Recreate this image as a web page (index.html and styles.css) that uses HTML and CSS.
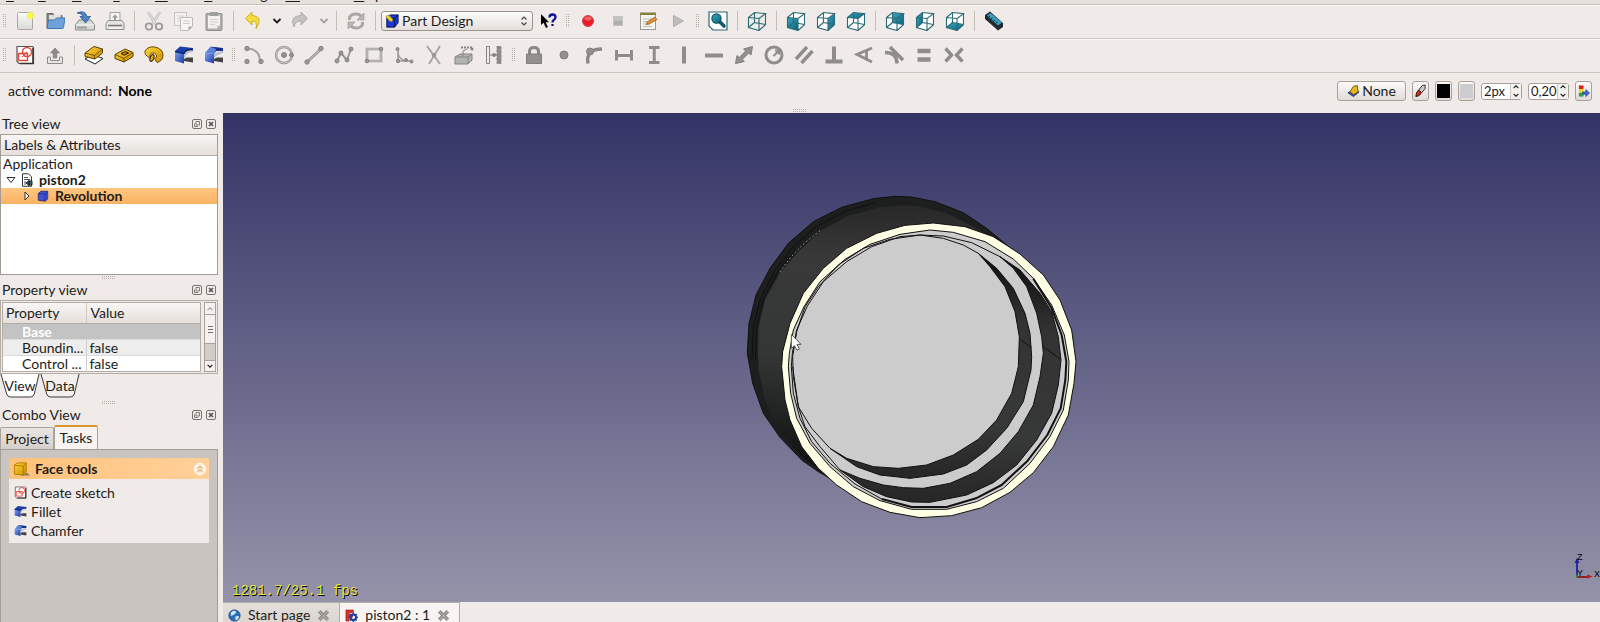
FILE: index.html
```html
<!DOCTYPE html>
<html lang="en">
<head>
    <meta charset="UTF-8">
    <meta name="viewport" content="width=device-width, initial-scale=1.0">
    <title>piston2 : 1</title>
    <link rel="stylesheet" href="styles.css">
</head>
<body>
    <!-- icon set -->
    <svg class="icon-set" aria-hidden="true">
        <defs>
            <linearGradient id="gold" x1="0" y1="0" x2="1" y2="1"><stop offset="0" stop-color="#ffd83a"/><stop offset="1" stop-color="#c98a00"/></linearGradient>
            <linearGradient id="blue" x1="0" y1="0" x2="1" y2="1"><stop offset="0" stop-color="#7fa0ee"/><stop offset="1" stop-color="#1b3ba5"/></linearGradient>
            <linearGradient id="teal" x1="0" y1="0" x2="1" y2="1"><stop offset="0" stop-color="#3fa6be"/><stop offset="1" stop-color="#07647c"/></linearGradient>
            <linearGradient id="paper" x1="0" y1="0" x2="0" y2="1"><stop offset="0" stop-color="#fcfcfa"/><stop offset="1" stop-color="#d8d8d6"/></linearGradient>
        </defs>
        <symbol id="new" viewBox="0 0 20 20"><rect x="2.500" y="1.500" width="15" height="17" rx="1" fill="url(#paper)" stroke="#a8a8a2"/><circle cx="15.500" cy="4.500" r="4" fill="#f7f064" opacity=".8"/><circle cx="15.500" cy="4.500" r="2" fill="#ffff2e"/></symbol>
        <symbol id="open" viewBox="0 0 20 20"><path d="M2 2.500h6l1 2h8v12H2z" fill="#868680" stroke="#6b6b66"/><path d="M4 4h12l-1 6H4z" fill="#e0e0dd"/><path d="M3.500 9h6l2-2h8.500l-1.500 9.500q-.2 1-1.200 1H2z" fill="#6ea2d8" stroke="#3e74b0"/></symbol>
        <symbol id="save" viewBox="0 0 20 20"><path d="M4 9h12l3.500 5v5h-19v-5z" fill="#d9d9d6" stroke="#8a8a86"/><path d="M1 14h18" stroke="#f8f8f8"/><path d="M2 16.500h10" stroke="#9b9b97" stroke-width="2"/><path d="M2 2Q10-1.500 12 5.500h3.500L10.500 12 5 5.500h3Q7 2 2 2z" fill="#4d86c6" stroke="#28568f" stroke-width=".8"/></symbol>
        <symbol id="print" viewBox="0 0 20 20"><path d="M5 10V1.500h10V10" fill="#f3f3f1" stroke="#a0a09c"/><path d="M10 3.500l3 3h-2V9H9V6.500H7z" fill="#999"/><path d="M3 9.500h14l2 3v6H1v-6z" fill="#e2e2df" stroke="#92928e"/><path d="M3 14.500h14" stroke="#777" stroke-width="1.500"/><path d="M4 17h12" stroke="#fff"/></symbol>
        <symbol id="cut" viewBox="0 0 20 20" fill="none"><path d="M4 1l7.500 12M16 1L8.500 13" stroke="#c0beba" stroke-width="2.500"/><path d="M4 1l7.500 12M16 1L8.500 13" stroke="#e9e7e4" stroke-width="1"/><circle cx="5" cy="15.500" r="3.200" stroke="#9c9a97" stroke-width="1.800"/><circle cx="15" cy="15.500" r="3.200" stroke="#9c9a97" stroke-width="1.800"/></symbol>
        <symbol id="copy" viewBox="0 0 20 20"><rect x=".5" y="1.500" width="12" height="13" fill="#f3f2f0" stroke="#c8c6c2"/><path d="M3 5h7M3 7.500h7M3 10h4" stroke="#d0cecb"/><path d="M6.500 6.500h12v9l-4 4h-8z" fill="#f6f5f4" stroke="#bebcb8"/><path d="M9 10h7M9 12.500h7" stroke="#ccc"/><path d="M14.500 19.500v-4h4z" fill="#aaa8a4"/></symbol>
        <symbol id="paste" viewBox="0 0 20 20"><rect x="2" y="2.500" width="16" height="17" rx="1" fill="#b0aeaa" stroke="#93918d"/><path d="M4 4.500h12v10l-3 3H4z" fill="#f1f0ee"/><path d="M6 1h8v4H6z" fill="#a09e9a"/><path d="M6 8.500h8M6 11h8M6 13.500h5" stroke="#d2d0cc"/><path d="M13 17.500v-3h3z" fill="#cbc9c5"/></symbol>
        <symbol id="undo" viewBox="0 0 20 20"><path d="M9 1L2.500 7.500 9 14v-4q6-.5 4 8 8-13-4-13.500z" fill="#f2dc3e" stroke="#c9a91c" stroke-width=".9"/></symbol>
        <symbol id="redo" viewBox="0 0 20 20"><path d="M11 1l6.500 6.500L11 14v-4q-6-.5-7 6-5-11 7-11.500z" fill="#c5c3c0" stroke="#aba9a5" stroke-width=".9"/></symbol>
        <symbol id="refresh" viewBox="0 0 20 20" fill="none"><path d="M3.500 9V6.500Q5 3 10 3q4 0 5.500 3M16.500 11v2.500Q15 17 10 17q-4 0-5.500-3" stroke="#aaa8a5" stroke-width="3"/><path d="M18 2v7h-7zM2 18v-7h7z" fill="#bab8b5" stroke="#9c9a97" stroke-width=".7"/></symbol>
        <symbol id="down" viewBox="0 0 10 10"><path d="M1.500 3L5 6.500 8.500 3" fill="none" stroke="currentColor" stroke-width="1.800"/></symbol>
        <symbol id="up" viewBox="0 0 10 10"><path d="M2 6.500L5 3.500 8 6.500" fill="none" stroke="currentColor" stroke-width="1.300"/></symbol>
        <symbol id="design" viewBox="0 0 16 16"><path d="M2 5l4-4h9v9l-4 5H2z" fill="#1638e0" stroke="#0a1040"/><path d="M2 5h9v10M11 5l4-4" fill="none" stroke="#0a1040"/><path d="M1 3l3-2 5 5-1 3-3-1z" fill="#f0d41d" stroke="#7d6a10" stroke-width=".7"/></symbol>
        <symbol id="whats" viewBox="0 0 20 20"><path d="M3 3v11l2.500-2.200L8 17l2-1-2.400-4.800H11z" fill="#000"/><path d="M11.500 6.500q0-3 3-3t3 2.700q0 1.800-2 3-1 .6-1 2.300M14.500 13v2" fill="none" stroke="#12128c" stroke-width="2.300"/></symbol>
        <symbol id="record" viewBox="0 0 20 20"><circle cx="10" cy="10" r="5.500" fill="#ec1c24" stroke="#c9484b"/><ellipse cx="10" cy="7.500" rx="3.500" ry="2" fill="#f46065"/></symbol>
        <symbol id="stop" viewBox="0 0 20 20"><rect x="5.500" y="5.500" width="9" height="9" fill="#b1afac" stroke="#c6c4c1"/><path d="M6 6h8v4H6z" fill="#c4c2c0"/></symbol>
        <symbol id="macro" viewBox="0 0 20 20"><rect x="2.500" y="2.500" width="15" height="16" fill="#f4f4f0" stroke="#99998f"/><path d="M2 1.500h16v2.500H2z" fill="#85803a"/><path d="M5 8h9M5 10.500h6M5 13h5M5 15.500h9" stroke="#bbb"/><path d="M8 13.500l1-2.500 8-5 2 2.500-8 4.700z" fill="#e3923a" stroke="#8e5a1c" stroke-width=".7"/></symbol>
        <symbol id="play" viewBox="0 0 20 20"><path d="M5.500 4.500v11l10-5.500z" fill="#c0bebb" stroke="#aeaca9"/></symbol>
        <symbol id="fit" viewBox="0 0 20 20"><path d="M1 1h18v18H5l-4-4z" fill="#fff" stroke="#2c6a76" stroke-width="1.200"/><path d="M12 11l4 4" stroke="#0f5a70" stroke-width="3.600" stroke-linecap="round"/><circle cx="8.500" cy="7.500" r="4.600" fill="url(#teal)" stroke="#0b5164" stroke-width="1.200"/></symbol>
        <symbol id="wire" viewBox="0 0 20 20"><path d="M1.500 6.500l10.500 1v12l-10.500-3zM1.500 6.500l6-5 11 1.200-6.500 4.800M18.500 2.700v11l-6.500 5.800M7.500 1.500v10l11 2M7.500 11.500l-6 5" fill="none" stroke="#2b6b76" stroke-width="1.100"/></symbol>
        <symbol id="box" viewBox="0 0 20 20"><path d="M1.500 6.500l6-5 11 1.200v11l-6.500 5.800-10.500-3z" fill="#fff"/></symbol>
        <symbol id="front" viewBox="0 0 20 20"><use href="#box"/><path d="M1.500 6.500l10.500 1v12l-10.500-3z" fill="url(#teal)"/><use href="#wire"/></symbol>
        <symbol id="right" viewBox="0 0 20 20"><use href="#box"/><path d="M12 7.500l6.500-4.800v11L12 19.500z" fill="url(#teal)"/><use href="#wire"/></symbol>
        <symbol id="top" viewBox="0 0 20 20"><use href="#box"/><path d="M1.500 6.500l6-5 11 1.200L12 7.500z" fill="url(#teal)"/><use href="#wire"/></symbol>
        <symbol id="rear" viewBox="0 0 20 20"><use href="#box"/><path d="M7.500 1.500l11 1.200v11l-11-2.200z" fill="url(#teal)"/><use href="#wire"/></symbol>
        <symbol id="left" viewBox="0 0 20 20"><use href="#box"/><path d="M1.500 6.500l6-5v10l-6 5z" fill="url(#teal)"/><use href="#wire"/></symbol>
        <symbol id="bottom" viewBox="0 0 20 20"><use href="#box"/><path d="M1.500 16.500l6-5 11 2.200-6.500 5.800z" fill="url(#teal)"/><use href="#wire"/></symbol>
        <symbol id="measure" viewBox="0 0 20 20"><path d="M1 4l5-3.500 13 11.500v4l-5 3.500L1 8z" fill="#222a30"/><path d="M3 4.500L6.500 2 18 11.500l-4 3z" fill="#3a9dbc"/><path d="M4.500 6l1.500-1M7 8l1.500-1M9.500 10l1.500-1M12 12l1.500-1" stroke="#0c2a36"/></symbol>

        <symbol id="sketch" viewBox="0 0 20 20"><path d="M2 1.500h15.500l1 1v16H4l-2-2z" fill="#fff" stroke="#555" stroke-width="1.200"/><path d="M18 3v15.500H5" fill="none" stroke="#333" stroke-width="1.600"/><circle cx="12" cy="7" r="4.500" fill="none" stroke="#e2453a" stroke-width="1.400"/><path d="M3.500 8.500h9v7h-9z" fill="none" stroke="#e2453a" stroke-width="1.400"/><path d="M7 12l5-5" stroke="#e2453a"/></symbol>
        <symbol id="leave" viewBox="0 0 20 20"><path d="M2.500 12v6.500h15V12h-3v3.500h-9V12z" fill="#e8e5e2" stroke="#8e8c89"/><path d="M10 3l4.500 5h-2.700v5H8.200V8H5.500z" fill="#8e8c89" stroke="#7d7b78" stroke-width=".7"/></symbol>
        <symbol id="pad" viewBox="0 0 20 20"><path d="M1 14l7-4.500 11 4L11 19z" fill="#fff" stroke="#222"/><path d="M1 8l9-6.500 8.500 2.500v4L11 14 1 11.500z" fill="url(#gold)" stroke="#5a3d00"/><path d="M1 8l9.500 2.500L18.500 4M10.500 10.500V14" fill="none" stroke="#5a3d00" stroke-width=".8"/></symbol>
        <symbol id="pocket" viewBox="0 0 20 20"><path d="M1 9.500L11 4l8 3.500v4L10 17l-9-3.500z" fill="url(#gold)" stroke="#5a3d00"/><path d="M1 9.500l9 4 9-6M10 13.500V17" fill="none" stroke="#5a3d00" stroke-width=".8"/><path d="M7 8.500l4.500-2 3 1.500-4 2.200z" fill="#b88400" stroke="#2c1d00"/></symbol>
        <symbol id="revolve" viewBox="0 0 20 20"><path d="M6 13q-6-3-5-7 3-5 10-4 8 2 8 8 0 6-6 7.500l-2.500-4q3-1 2-3.500-2-3-5-2-2 .6-1.500 5z" fill="url(#gold)" stroke="#6e4a00"/><ellipse cx="8" cy="13" rx="1.800" ry="3.500" fill="#e8a800" stroke="#2c1d00" transform="rotate(20 8 13)"/></symbol>
        <symbol id="fillet" viewBox="0 0 20 20"><path d="M10 14l3-1.500h6v5l-9-1.500z" fill="#444"/><path d="M9 9q3-5 10-4v2q-6-.5-8 6l-2 1z" fill="#b9bfd4"/><path d="M1 6l9 2v10.500L1 16z" fill="url(#blue)"/><path d="M1 6l5-4.500L19 3v2.500Q12 4 10 9L1 7z" fill="#1c3fb0"/><path d="M1 6.500l9 2Q12 4 19 4.500" fill="none" stroke="#0b1c5a" stroke-width="1.200"/></symbol>
        <symbol id="chamfer" viewBox="0 0 20 20"><path d="M10 14l3-1.500h6v5l-9-1.500z" fill="#444"/><path d="M10 8l9-2v2l-7 3-2 3z" fill="#b9bfd4"/><path d="M1 8l9 1v9.500L1 16z" fill="url(#blue)"/><path d="M1 8l5-6 7 .5L10 9z" fill="#5b82dd"/><path d="M6 1.500L19 3v3L12 6l-2 3 2-5z" fill="#162f8a"/></symbol>

        <symbol id="arc" viewBox="0 0 20 20"><path d="M4 3.500q12 1 12 13" fill="none" stroke="#a5a3a0" stroke-width="2"/><g fill="#9a9895" stroke="#858380"><circle cx="3" cy="3.500" r="2.200"/><circle cx="3" cy="16.500" r="2.200"/><circle cx="17" cy="16.500" r="2.200"/></g></symbol>
        <symbol id="circle" viewBox="0 0 20 20"><circle cx="10" cy="10" r="8" fill="none" stroke="#989693" stroke-width="2.400"/><circle cx="10" cy="10" r="8" fill="none" stroke="#cfccc9" stroke-width=".8"/><g fill="#94928f" stroke="#858380"><circle cx="10" cy="10" r="2.500"/><circle cx="17.500" cy="10" r="2"/></g></symbol>
        <symbol id="line" viewBox="0 0 20 20"><path d="M3 17L17 4" stroke="#989693" stroke-width="3"/><path d="M3 17L17 4" stroke="#cfccc9"/><g fill="#9a9895" stroke="#858380"><circle cx="3" cy="17" r="2.200"/><circle cx="17" cy="3.500" r="2.200"/></g></symbol>
        <symbol id="poly" viewBox="0 0 20 20"><path d="M3 16l4-8 6 7 4-11" fill="none" stroke="#989693" stroke-width="2"/><g fill="#9a9895" stroke="#858380"><circle cx="3" cy="16" r="2"/><circle cx="7" cy="8" r="2"/><circle cx="13" cy="15" r="2"/><circle cx="17" cy="4" r="2"/></g></symbol>
        <symbol id="rect" viewBox="0 0 20 20"><path d="M3 4h14v12H3z" fill="none" stroke="#989693" stroke-width="2.600"/><path d="M3 4h14v12H3z" fill="none" stroke="#dad7d4" stroke-width=".8"/><g fill="#9a9895" stroke="#858380"><circle cx="3" cy="16" r="1.800"/><circle cx="17" cy="4" r="1.800"/></g></symbol>
        <symbol id="corner" viewBox="0 0 20 20"><path d="M4 3v13h13M4 8q1 7 9 8" fill="none" stroke="#9f9d9a" stroke-width="1.600"/><g fill="#9a9895" stroke="#858380"><circle cx="3.500" cy="4" r="1.500"/><circle cx="4" cy="16" r="1.700"/><circle cx="12" cy="15" r="1.500"/><circle cx="17.500" cy="16.500" r="1.500"/></g></symbol>
        <symbol id="trim" viewBox="0 0 20 20"><path d="M3 1l13 18M16 1L5 19" fill="none" stroke="#a3a19e" stroke-width="1.800"/><circle cx="10" cy="10" r="2.300" fill="#9a9895"/></symbol>
        <symbol id="external" viewBox="0 0 20 20"><path d="M1 12l5-3h12v6l-4 4H1z" fill="#b5b3b0" stroke="#858380"/><path d="M1 12h13v7M14 12l4-3M9 11V6l4-2" fill="none" stroke="#858380"/><path d="M7 2.500h11" stroke="#858380" stroke-dasharray="2 1" stroke-width="2"/><circle cx="18" cy="4" r="1.500" fill="#858380"/></symbol>
        <symbol id="mirror" viewBox="0 0 20 20"><path d="M2.500 1.500h3v17h-3z" fill="#f1eeeb" stroke="#858380"/><path d="M13 1.500h4v17h-4z" fill="#8f8d8a" stroke="#858380" stroke-dasharray="3 1"/><path d="M6 10h7" stroke="#858380"/><circle cx="10" cy="10" r="2" fill="#858380"/></symbol>

        <symbol id="lock" viewBox="0 0 20 20"><path d="M5.500 10V6.500q0-4 4.500-4t4.500 4V10" fill="none" stroke="#8a8886" stroke-width="3"/><path d="M2.500 9h15v9.500h-15z" fill="#93918f" stroke="#807e7c"/></symbol>
        <symbol id="point" viewBox="0 0 20 20"><circle cx="10" cy="10" r="4" fill="#93918f" stroke="#807e7c"/></symbol>
        <symbol id="pointon" viewBox="0 0 20 20"><path d="M4 18.500Q1.500 4 18 4" fill="none" stroke="#8a8886" stroke-width="3.400"/><circle cx="6" cy="6.500" r="3.500" fill="#93918f" stroke="#807e7c"/></symbol>
        <symbol id="distx" viewBox="0 0 20 20"><path d="M2.500 5v10.500M17.500 5v10.500M2.500 10.500h15" stroke="#8f8d8b" stroke-width="3"/></symbol>
        <symbol id="disty" viewBox="0 0 20 20"><path d="M5 2.500h10.500M5 17.500h10.500M10.250 2.500v15" stroke="#8f8d8b" stroke-width="3"/></symbol>
        <symbol id="vert" viewBox="0 0 20 20"><path d="M10 1.500v17" stroke="#8f8d8b" stroke-width="4"/></symbol>
        <symbol id="horiz" viewBox="0 0 20 20"><path d="M1 10.500h18" stroke="#8f8d8b" stroke-width="4"/></symbol>
        <symbol id="dist" viewBox="0 0 20 20"><path d="M1.500 18.500l1.500-8 2.200 2 6.500-6.500-2.200-2 9-2.500-1.500 8.500-2.300-2-6.500 6.500 2.200 2z" fill="#93918f" stroke="#807e7c"/></symbol>
        <symbol id="radius" viewBox="0 0 20 20"><circle cx="10" cy="10" r="8" fill="none" stroke="#8f8d8b" stroke-width="3"/><path d="M9.500 11l5-5M11 5.500h4v4" fill="none" stroke="#8f8d8b" stroke-width="2"/></symbol>
        <symbol id="parallel" viewBox="0 0 20 20"><path d="M2 14L13 2M7.500 18l11-12" stroke="#8f8d8b" stroke-width="3.400"/></symbol>
        <symbol id="perp" viewBox="0 0 20 20"><path d="M10 1.500V16M1.500 16.500h17" stroke="#8f8d8b" stroke-width="4"/></symbol>
        <symbol id="angle" viewBox="0 0 20 20"><path d="M18 3L3 9.500 18 17M12.500 6v8" fill="none" stroke="#8f8d8b" stroke-width="2.800"/></symbol>
        <symbol id="tangent" viewBox="0 0 20 20"><path d="M6 2l13 13M1 7.500q12 0 12 11" fill="none" stroke="#8f8d8b" stroke-width="3.400"/></symbol>
        <symbol id="equal" viewBox="0 0 20 20"><path d="M3.500 6h13M3.500 14.500h13" stroke="#8f8d8b" stroke-width="4.500"/></symbol>
        <symbol id="symm" viewBox="0 0 20 20"><path d="M1.500 3.500l6 6.500-6 6.500M18.500 3.500l-6 6.500 6 6.500" fill="none" stroke="#8f8d8b" stroke-width="3.400"/></symbol>

        <symbol id="plane" viewBox="0 0 14 14"><path d="M1 9l4-2 8 1-6 5z" fill="#2e50b8" stroke="#14204d" stroke-width=".8"/><path d="M3 8l4-6 4-1 1 7-5 3z" fill="#e9b51c" stroke="#4f3b00" stroke-width=".8"/></symbol>
        <symbol id="brush" viewBox="0 0 14 14"><path d="M5 6l4-5 3-.5v4L8 9z" fill="#ccc" stroke="#222"/><path d="M2 13q0-5 3-7l3 3q-2 4-6 4z" fill="#c33222" stroke="#3a0e08"/></symbol>
        <symbol id="apply" viewBox="0 0 14 14"><path d="M2 1h5v4H2z" fill="#e02020"/><path d="M2 5h5v4H2z" fill="#e8d820"/><path d="M2 9h5v4H2z" fill="#28a050"/><path d="M6 8h3.500V5.500l4 3.700-4 3.800v-2.500H6z" fill="#3c6cc8" stroke="#1b3a80" stroke-width=".7"/></symbol>
        <symbol id="float" viewBox="0 0 10 10"><rect x=".5" y=".5" width="9" height="9" rx="1.500" fill="none" stroke="#77736f"/><path d="M4 2.500h3.500V6H4zM2.500 4.500V7.500H6" fill="none" stroke="#77736f" stroke-width=".9"/></symbol>
        <symbol id="close" viewBox="0 0 10 10"><rect x=".5" y=".5" width="9" height="9" rx="1.500" fill="none" stroke="#77736f"/><path d="M3 3l4 4M7 3L3 7" stroke="#55514e" stroke-width="1.600"/></symbol>
        <symbol id="doc" viewBox="0 0 12 14"><path d="M1.500 .8h6l3 3v9.500h-9z" fill="#fff" stroke="#333"/><path d="M3 4.500h4M3 6.500h6M3 9h2M3 11h2" stroke="#555"/><path d="M5 10l3-2.500v5zM8 8h3v4H8z" fill="#2a6c74" stroke="#242424"/></symbol>
        <symbol id="cube" viewBox="0 0 14 14"><path d="M1.500 4l3-2.500h8v9l-3 2.500-8-1z" fill="#3a50d0" stroke="#27307c"/><path d="M1.500 4l8 .8V13M9.500 4.800l3-3.300" fill="none" stroke="#27307c"/></symbol>
        <symbol id="goldcube" viewBox="0 0 18 16"><path d="M8 15h10l-3-3z" fill="#8a7a5c"/><path d="M1.500 4l3-2.500H14V11l-3 3.500-9.500-1z" fill="url(#gold)" stroke="#b07a00"/><path d="M1.500 4l9.500 1v9.500M11 5l3-3.500" fill="none" stroke="#b07a00"/></symbol>
        <symbol id="collapse" viewBox="0 0 12 12"><circle cx="6" cy="6" r="5.500" fill="#f6efe4" stroke="#fff"/><path d="M3.500 5.800L6 3.300l2.500 2.500M3.500 9L6 6.500 8.500 9" fill="none" stroke="#eeb46e" stroke-width="1.200"/></symbol>
        <symbol id="globe" viewBox="0 0 14 14"><circle cx="7" cy="7" r="6" fill="#2f6fb8" stroke="#1c4a86"/><path d="M3 4q3-3 5-1.500T6.500 6 3 7zM8 8q3-1 4 0-1 4-4 4z" fill="#d4e6f6"/></symbol>
        <symbol id="app" viewBox="0 0 14 14"><path d="M1 1h8v3H4.500v2H8v3H4.500v4H1z" fill="#e03022" stroke="#8c1810" stroke-width=".6"/><circle cx="9" cy="9" r="3" fill="none" stroke="#1d3c9c" stroke-width="2.200"/><path d="M9 4v2M9 12v2M4 9h2M12 9h2M5.500 5.500L7 7M11 11l1.500 1.500M12.500 5.500L11 7M5.500 12.500L7 11" stroke="#1d3c9c" stroke-width="1.500"/></symbol>
        <symbol id="cross" viewBox="0 0 12 12"><path d="M2 2l8 8M10 2l-8 8" stroke="#8a8682" stroke-width="3.200"/><path d="M2 2l8 8M10 2l-8 8" stroke="#b5b1ad"/></symbol>
    </svg>

    <nav class="menubar">
        <a href="#"><u>F</u>ile</a><a href="#"><u>E</u>dit</a><a href="#"><u>V</u>iew</a><a href="#"><u>T</u>ools</a><a href="#"><u>M</u>acro</a><a href="#"><u>P</u>art Design</a><a href="#"><u>W</u>indows</a><a href="#"><u>H</u>elp</a>
    </nav>

    <div class="toolbar">
        <span class="handle"></span>
        <button class="tool" aria-label="New"><svg><use href="#new"/></svg></button>
        <button class="tool" aria-label="Open"><svg><use href="#open"/></svg></button>
        <button class="tool" aria-label="Save"><svg><use href="#save"/></svg></button>
        <button class="tool" aria-label="Print"><svg><use href="#print"/></svg></button>
        <span class="sep"></span>
        <button class="tool" aria-label="Cut"><svg><use href="#cut"/></svg></button>
        <button class="tool" aria-label="Copy"><svg><use href="#copy"/></svg></button>
        <button class="tool" aria-label="Paste"><svg><use href="#paste"/></svg></button>
        <span class="sep"></span>
        <button class="tool" aria-label="Undo"><svg><use href="#undo"/></svg></button>
        <button class="drop" aria-label="Undo list"><svg><use href="#down"/></svg></button>
        <button class="tool" aria-label="Redo"><svg><use href="#redo"/></svg></button>
        <button class="drop off" aria-label="Redo list"><svg><use href="#down"/></svg></button>
        <span class="sep"></span>
        <button class="tool" aria-label="Refresh"><svg><use href="#refresh"/></svg></button>
        <span class="sep"></span>
        <div class="workbench">
            <svg class="wb-icon"><use href="#design"/></svg>
            <select aria-label="Workbench"><option>Part Design</option></select>
            <svg class="wb-arrows" viewBox="0 0 8 12"><path d="M1.500 4.500L4 2l2.500 2.500M1.500 7.500L4 10l2.500-2.500" fill="none" stroke="#444" stroke-width="1.200"/></svg>
        </div>
        <button class="tool" aria-label="What's this?"><svg><use href="#whats"/></svg></button>
        <span class="handle"></span>
        <button class="tool" aria-label="Record macro"><svg><use href="#record"/></svg></button>
        <button class="tool" aria-label="Stop macro"><svg><use href="#stop"/></svg></button>
        <button class="tool" aria-label="Macros"><svg><use href="#macro"/></svg></button>
        <button class="tool" aria-label="Execute macro"><svg><use href="#play"/></svg></button>
        <span class="handle"></span>
        <button class="tool" aria-label="Fit all"><svg><use href="#fit"/></svg></button>
        <span class="sep"></span>
        <button class="tool" aria-label="Axometric"><svg><use href="#wire"/></svg></button>
        <span class="sep"></span>
        <button class="tool" aria-label="Front"><svg><use href="#front"/></svg></button>
        <button class="tool" aria-label="Right"><svg><use href="#right"/></svg></button>
        <button class="tool" aria-label="Top"><svg><use href="#top"/></svg></button>
        <span class="sep"></span>
        <button class="tool" aria-label="Rear"><svg><use href="#rear"/></svg></button>
        <button class="tool" aria-label="Left"><svg><use href="#left"/></svg></button>
        <button class="tool" aria-label="Bottom"><svg><use href="#bottom"/></svg></button>
        <span class="sep"></span>
        <button class="tool" aria-label="Measure distance"><svg><use href="#measure"/></svg></button>
    </div>

    <div class="toolbar">
        <span class="handle"></span>
        <button class="tool" aria-label="Create sketch"><svg><use href="#sketch"/></svg></button>
        <button class="tool" aria-label="Leave sketch"><svg><use href="#leave"/></svg></button>
        <span class="sep"></span>
        <button class="tool" aria-label="Pad"><svg><use href="#pad"/></svg></button>
        <button class="tool" aria-label="Pocket"><svg><use href="#pocket"/></svg></button>
        <button class="tool" aria-label="Revolution"><svg><use href="#revolve"/></svg></button>
        <button class="tool" aria-label="Fillet"><svg><use href="#fillet"/></svg></button>
        <button class="tool" aria-label="Chamfer"><svg><use href="#chamfer"/></svg></button>
        <span class="handle"></span>
        <button class="tool" aria-label="Arc"><svg><use href="#arc"/></svg></button>
        <button class="tool" aria-label="Circle"><svg><use href="#circle"/></svg></button>
        <button class="tool" aria-label="Line"><svg><use href="#line"/></svg></button>
        <button class="tool" aria-label="Polyline"><svg><use href="#poly"/></svg></button>
        <button class="tool" aria-label="Rectangle"><svg><use href="#rect"/></svg></button>
        <button class="tool" aria-label="Sketch fillet"><svg><use href="#corner"/></svg></button>
        <button class="tool" aria-label="Trim"><svg><use href="#trim"/></svg></button>
        <button class="tool" aria-label="External geometry"><svg><use href="#external"/></svg></button>
        <button class="tool" aria-label="Construction mode"><svg><use href="#mirror"/></svg></button>
        <span class="handle"></span>
        <button class="tool" aria-label="Lock"><svg><use href="#lock"/></svg></button>
        <button class="tool" aria-label="Coincident"><svg><use href="#point"/></svg></button>
        <button class="tool" aria-label="Point on object"><svg><use href="#pointon"/></svg></button>
        <button class="tool" aria-label="Horizontal distance"><svg><use href="#distx"/></svg></button>
        <button class="tool" aria-label="Vertical distance"><svg><use href="#disty"/></svg></button>
        <button class="tool" aria-label="Vertical"><svg><use href="#vert"/></svg></button>
        <button class="tool" aria-label="Horizontal"><svg><use href="#horiz"/></svg></button>
        <button class="tool" aria-label="Distance"><svg><use href="#dist"/></svg></button>
        <button class="tool" aria-label="Radius"><svg><use href="#radius"/></svg></button>
        <button class="tool" aria-label="Parallel"><svg><use href="#parallel"/></svg></button>
        <button class="tool" aria-label="Perpendicular"><svg><use href="#perp"/></svg></button>
        <button class="tool" aria-label="Angle"><svg><use href="#angle"/></svg></button>
        <button class="tool" aria-label="Tangent"><svg><use href="#tangent"/></svg></button>
        <button class="tool" aria-label="Equal"><svg><use href="#equal"/></svg></button>
        <button class="tool" aria-label="Symmetric"><svg><use href="#symm"/></svg></button>
    </div>

    <div class="command">
        <span>active command:</span>
        <b>None</b>
        <div class="draft">
            <button class="btn wide"><svg><use href="#plane"/></svg>None</button>
            <button class="btn" aria-label="Construction"><svg><use href="#brush"/></svg></button>
            <button class="btn" aria-label="Line color"><span class="swatch black"></span></button>
            <button class="btn" aria-label="Face color"><span class="swatch grey"></span></button>
            <div class="spin">
                <input type="text" value="2px" aria-label="Line width">
                <div class="steps"><button aria-label="More"><svg><use href="#up"/></svg></button><button aria-label="Less"><svg class="flip"><use href="#up"/></svg></button></div>
            </div>
            <div class="spin">
                <input type="text" value="0,20" aria-label="Text size">
                <div class="steps"><button aria-label="More"><svg><use href="#up"/></svg></button><button aria-label="Less"><svg class="flip"><use href="#up"/></svg></button></div>
            </div>
            <button class="btn" aria-label="Apply style"><svg><use href="#apply"/></svg></button>
        </div>
    </div>
    <div class="grip"></div>

    <main class="workspace">
        <aside class="docks">
            <section class="dock">
                <header class="dock-title">Tree view
                    <button aria-label="Float"><svg><use href="#float"/></svg></button><button aria-label="Close"><svg><use href="#close"/></svg></button>
                </header>
                <div class="tree">
                    <div class="tree-head">Labels &amp; Attributes</div>
                    <ul>
                        <li class="root">Application</li>
                        <li class="document"><svg class="arrow" viewBox="0 0 10 10"><path d="M1 2.500h8L5 7.500z" fill="#fff" stroke="#333"/></svg><svg class="item"><use href="#doc"/></svg>piston2</li>
                        <li class="feature"><svg class="arrow" viewBox="0 0 10 10"><path d="M3 1v8L7 5z" fill="#fff" stroke="#333"/></svg><svg class="item"><use href="#cube"/></svg>Revolution</li>
                    </ul>
                </div>
            </section>
            <div class="grip"></div>

            <section class="dock">
                <header class="dock-title">Property view
                    <button aria-label="Float"><svg><use href="#float"/></svg></button><button aria-label="Close"><svg><use href="#close"/></svg></button>
                </header>
                <div class="props">
                    <div class="props-scroll">
                        <table>
                            <thead><tr><th>Property</th><th>Value</th></tr></thead>
                            <tbody>
                                <tr class="group"><td colspan="2">Base</td></tr>
                                <tr class="alt"><td>Boundin...</td><td>false</td></tr>
                                <tr><td>Control ...</td><td>false</td></tr>
                            </tbody>
                        </table>
                    </div>
                    <div class="scrollbar">
                        <button class="off" aria-label="Scroll up"><svg><use href="#up"/></svg></button>
                        <span class="thumb"></span>
                        <button aria-label="Scroll down"><svg class="flip"><use href="#up"/></svg></button>
                    </div>
                </div>
                <div class="view-tabs">
                    <button class="active"><svg viewBox="0 0 42 24" preserveAspectRatio="none"><path d="M1 0l6 20q1 3 4 3h21q3 0 4-3l5-20" fill="#fff" stroke="#333"/></svg><span>View</span></button>
                    <button><svg viewBox="0 0 42 24" preserveAspectRatio="none"><path d="M1 0l6 20q1 3 4 3h21q3 0 4-3l5-20" fill="#f3efec" stroke="#333"/></svg><span>Data</span></button>
                </div>
            </section>
            <div class="grip"></div>

            <section class="dock combo">
                <header class="dock-title">Combo View
                    <button aria-label="Float"><svg><use href="#float"/></svg></button><button aria-label="Close"><svg><use href="#close"/></svg></button>
                </header>
                <div class="tabs">
                    <button>Project</button>
                    <button class="active">Tasks</button>
                </div>
                <div class="tasks">
                    <div class="task-box">
                        <h2><svg class="face"><use href="#goldcube"/></svg>Face tools<svg class="fold"><use href="#collapse"/></svg></h2>
                        <a href="#"><svg><use href="#sketch"/></svg>Create sketch</a>
                        <a href="#"><svg><use href="#fillet"/></svg>Fillet</a>
                        <a href="#"><svg><use href="#chamfer"/></svg>Chamfer</a>
                    </div>
                </div>
            </section>
        </aside>

        <section class="viewer">
            <div class="scene">
                <!-- piston, 3 units per pixel -->
                <svg class="piston" viewBox="36 39 1020 990" stroke="#111" stroke-width="3" stroke-linejoin="round">
                    <defs>
                        <linearGradient id="side" x1="0" y1="0" x2="0" y2="1"><stop offset="0" stop-color="#282828"/><stop offset=".2" stop-color="#393939"/><stop offset=".55" stop-color="#343636"/><stop offset="1" stop-color="#0d0d0d"/></linearGradient>
                        <linearGradient id="inner" x1="0" y1="0" x2="0" y2="1"><stop offset="0" stop-color="#0d0d0d"/><stop offset=".3" stop-color="#333"/><stop offset=".75" stop-color="#373838"/><stop offset="1" stop-color="#262626"/></linearGradient>
                    </defs>
                    <path fill="#1c1f1e" d="M53 500L57 430 78 345 120 265 175 190 250 125 335 82 430 56 495 49 545 51 615 65 700 98 770 145 830 195 600 500 300 895 265 875 215 840 150 772 100 700 68 610 52 520z"/>
                    <path fill="url(#side)" stroke="none" d="M84 520L86 440 105 360 150 278 205 215 275 150 355 108 450 82 510 76 560 77 650 100 720 135 790 175 600 500 300 890 215 830 150 755 105 660 86 570z"/>
                    <path fill="none" stroke="#0e100f" stroke-width="3" d="M66 540L70 440 92 355 135 272 190 200 262 138 345 94 435 68M76 540L80 440 100 358 143 275 198 208"/>
                    <path fill="none" stroke="#b5b5b5" stroke-width="3" stroke-dasharray="4 8" d="M150 275L185 228 225 188 270 152"/>
                    <path fill="#ffffe6" d="M610 129L525 136 440 160 350 205 280 265 220 340 180 430 158 515 155 560 165 660 180 720 215 800 265 865 320 915 395 965 480 997 570 1013 665 1007 755 983 840 937 910 878 970 800 1015 705 1032 610 1038 545 1025 450 990 360 940 285 870 222 790 170 705 140z"/>
                    <path fill="#ccc" d="M600 150L510 163 420 193 345 238 270 305 222 380 190 450 178 520 175 560 182 640 200 715 240 790 300 860 370 920 450 962 545 988 650 988 740 965 820 925 900 850 960 770 1000 690 1015 600 1017 545 1003 465 965 375 910 295 850 237 765 185 670 157z"/>
                    <path fill="none" stroke-width="6" d="M910 296L965 385 995 465 1009 545 1006 600 992 685 952 765 893 842 815 915 738 955 650 981 545 981 455 957"/>
                    <path fill="none" d="M455 957L375 912 300 850 245 785 210 715 190 640 184 560 187 520 200 450 232 378 280 305 350 245 425 200 510 170 570 165 640 168 725 188 810 230 875 280M188 560L205 680 225 740 270 800 330 870"/>
                    <path fill="url(#inner)" d="M810 230L870 270 930 340 965 395 985 470 993 540 985 615 965 700 920 780 860 855 790 908 710 945 600 967 545 966 470 950 400 920 330 870 390 895 460 915 520 923 580 925 660 910 740 875 810 820 865 755 910 675 930 590 940 520 935 470 920 400 890 320 850 265z"/>
                    <path fill="url(#inner)" d="M745 220L800 265 850 325 885 400 900 460 905 530 903 570 880 665 830 745 770 810 710 855 640 882 540 895 450 885 380 860 300 805 350 835 430 860 505 865 590 855 670 825 745 778 800 720 845 640 865 560 868 470 855 395 825 320 780 260z"/>
                    <path fill="none" d="M300 805L245 745 205 680 190 590 188 530 200 455 225 380 265 320 325 255 400 205 480 178 570 165 640 175 700 195 745 220M872 480L905 502M940 500L990 537"/>
                    <path fill="#fff" stroke="#555" stroke-width="3" d="M184 463v42l9-8 8 14 7-4-7-14h12z"/>
                </svg>
                <p class="fps">1281.7/25.1 fps</p>
                <svg class="axes" viewBox="0 0 28 30"><path d="M5 24V9" stroke="#2b2ba5" stroke-width="2"/><path d="M2.500 11L5 6l2.500 5z" fill="#1f1f96"/><path d="M5 25h13" stroke="#8e2027" stroke-width="2"/><path d="M15 22.500l6 2-6 2z" fill="#b4232a"/><path d="M4 24h2" stroke="#1d8a2a" stroke-width="3"/><text x="5" y="8">Z</text><text x="5" y="24">Y</text><text x="22" y="25">X</text></svg>
            </div>
            <div class="doc-tabs">
                <button><svg><use href="#globe"/></svg>Start page<svg><use href="#cross"/></svg></button>
                <button class="active"><svg><use href="#app"/></svg>piston2 : 1<svg><use href="#cross"/></svg></button>
            </div>
        </section>
    </main>
</body>
</html>
```

FILE: styles.css
```css
* {
    box-sizing: border-box;
}
body {
    display: flex;
    flex-direction: column;
    height: 100vh;
    margin: 0;
    overflow: hidden;
    background-color: #f0ebe8;
    color: #1e1c1a;
    font-family: Lato, "Open Sans", sans-serif;
    font-size: 14px;
    line-height: 16px;
}
button {
    padding: 0;
    border: none;
    background: none;
    color: inherit;
    font: inherit;
}
a {
    color: inherit;
    text-decoration: none;
}
.icon-set {
    position: absolute;
    width: 0;
    height: 0;
}
.flip {
    transform: rotate(180deg);
}

/* menu and toolbars */
.menubar {
    display: flex;
    flex: none;
    align-items: flex-end;
    gap: 10px;
    height: 5px;
    padding: 0 0 1px 6px;
    overflow: hidden;
    background-color: #e6e1dc;
    border-bottom: 1px solid #c9c2bc;
}
.toolbar {
    display: flex;
    flex: none;
    align-items: center;
    height: 34px;
    padding-bottom: 2px;
    border-top: 1px solid #faf8f6;
    border-bottom: 1px solid #cfc8c2;
}
.tool {
    display: flex;
    justify-content: center;
    flex: none;
    width: 30px;
}
.tool svg {
    width: 20px;
    height: 20px;
}
.drop {
    display: flex;
    justify-content: center;
    width: 17px;
}
.drop svg {
    width: 10px;
    height: 10px;
}
.off {
    color: #a5a19d;
}
.sep {
    flex: none;
    width: 1px;
    height: 20px;
    margin: 0 4px;
    background-color: #c5beb8;
}
.handle,
.grip {
    flex: none;
    background-image: linear-gradient(transparent 1px, #f0ebe8 1px), linear-gradient(90deg, #b5aea8 1px, transparent 1px);
    background-size: 2px 2px;
}
.handle {
    width: 4px;
    height: 14px;
    margin: 0 3px;
}
.grip {
    align-self: center;
    width: 14px;
    height: 4px;
    margin-top: 1px;
}
.workbench {
    position: relative;
    width: 152px;
    margin-left: 1px;
}
.workbench select {
    width: 100%;
    height: 20px;
    padding: 0 20px;
    appearance: none;
    border: 1px solid #9a938c;
    border-radius: 3px;
    background: linear-gradient(#fdfcfb, #e3dedb);
    color: inherit;
    font: inherit;
    line-height: 16px;
}
.wb-icon {
    position: absolute;
    top: 3px;
    left: 4px;
    width: 14px;
    height: 14px;
}
.wb-arrows {
    position: absolute;
    top: 4px;
    right: 5px;
    width: 8px;
    height: 12px;
}

/* command bar */
.command {
    display: flex;
    flex: none;
    align-items: center;
    gap: 6px;
    height: 35px;
    padding: 0 8px;
}
.command b {
    color: #000;
}
.draft {
    display: flex;
    gap: 6px;
    margin-left: auto;
}
.btn {
    display: flex;
    align-items: center;
    justify-content: center;
    gap: 2px;
    width: 17px;
    height: 20px;
    border: 1px solid #a8a19a;
    border-radius: 3px;
    background: linear-gradient(#fcfbfa, #e0dbd7);
}
.btn.wide {
    width: 69px;
}
.btn svg {
    width: 13px;
    height: 14px;
}
.swatch {
    width: 13px;
    height: 14px;
}
.black {
    background-color: #000;
}
.grey {
    background-color: #cccbd0;
}
.spin {
    display: flex;
    width: 41px;
    height: 17px;
    margin-top: 2px;
    border: 1px solid #a8a19a;
    border-radius: 3px;
    background-color: #fff;
}
.spin input {
    width: 28px;
    padding: 0 0 0 2px;
    border: none;
    background: none;
    color: inherit;
    font: inherit;
    font-size: 13px;
}
.steps {
    display: flex;
    flex-direction: column;
    width: 12px;
    border-left: 1px solid #cdc7c1;
    background-color: #f3f0ed;
}
.steps button {
    display: flex;
    flex: 1;
    align-items: center;
    justify-content: center;
    min-height: 0;
}
.steps svg {
    width: 8px;
    height: 8px;
}

/* left docks */
.workspace {
    display: flex;
    flex: 1;
    min-height: 0;
}
.docks {
    display: flex;
    flex-direction: column;
    flex: none;
    width: 223px;
    padding: 1px 5px 0 0;
}
.dock-title {
    display: flex;
    align-items: center;
    gap: 4px;
    height: 20px;
    padding: 0 2px;
}
.dock-title button {
    display: flex;
}
.dock-title button:first-of-type {
    margin-left: auto;
}
.dock-title svg {
    width: 10px;
    height: 10px;
}
.tree {
    height: 141px;
    border: 1px solid #a39c95;
    background-color: #fff;
}
.tree-head,
.props th {
    background: linear-gradient(#f8f6f4, #e4dfda);
    border-bottom: 1px solid #b4ada6;
}
.tree-head {
    height: 21px;
    padding: 2px 3px;
}
.tree ul {
    margin: 0;
    padding: 0;
    list-style: none;
}
.tree li {
    display: flex;
    align-items: center;
    height: 16px;
    padding-left: 2px;
    font-weight: bold;
}
.tree .root {
    font-weight: normal;
}
.tree .document {
    padding-left: 5px;
}
.tree .feature {
    padding-left: 21px;
    background: linear-gradient(#ffc680, #f9b264);
}
.arrow {
    width: 10px;
    height: 10px;
    margin-right: 5px;
}
.item {
    width: 12px;
    height: 14px;
    margin-right: 6px;
}
.props {
    display: flex;
    gap: 3px;
    height: 74px;
    padding: 1px;
    border: 1px solid #b4ada6;
}
.props-scroll {
    flex: 1;
    overflow: hidden;
    border: 1px solid #b4ada6;
    background-color: #fff;
}
.props table {
    width: 100%;
    border-collapse: collapse;
    table-layout: fixed;
    line-height: 15px;
}
.props th {
    height: 20px;
    padding: 0 4px;
    font-weight: normal;
    text-align: left;
}
.props th:first-child {
    width: 83px;
    padding-left: 3px;
}
.props th + th {
    border-left: 1px solid #cfc8c2;
}
.props td {
    height: 16px;
    padding: 0 3px;
    border-bottom: 1px solid #dcdcdc;
    white-space: nowrap;
}
.props td:first-child {
    padding-left: 19px;
}
.props td + td {
    border-left: 1px solid #cfcfcf;
}
.props .group td {
    background-color: #c3c3c3;
    color: #fff;
    font-weight: bold;
}
.alt {
    background-color: #ededed;
}
.scrollbar {
    display: flex;
    flex-direction: column;
    width: 12px;
    border: 1px solid #a8a19a;
    background-color: #d3cdc8;
}
.scrollbar button,
.thumb {
    display: flex;
    align-items: center;
    justify-content: center;
    height: 11px;
    background-color: #f4f1ee;
}
.scrollbar svg {
    width: 8px;
    height: 8px;
}
.thumb {
    height: 30px;
    border: 1px solid #a8a19a;
    border-width: 1px 0;
}
.thumb::after {
    content: "";
    width: 5px;
    height: 7px;
    background: repeating-linear-gradient(#77716c 0 1px, transparent 1px 3px);
}
.scrollbar button:last-child {
    margin-top: auto;
    border-top: 1px solid #a8a19a;
}
.view-tabs {
    display: flex;
    height: 26px;
}
.view-tabs button {
    display: grid;
    width: 40px;
    height: 24px;
    place-items: center;
}
.view-tabs svg,
.view-tabs span {
    grid-area: 1 / 1;
}
.view-tabs svg {
    width: 40px;
    height: 24px;
}
.combo {
    display: flex;
    flex: 1;
    flex-direction: column;
    min-height: 0;
}
.tabs {
    display: flex;
    align-items: flex-end;
    height: 24px;
}
.tabs button {
    width: 54px;
    height: 22px;
    border: 1px solid #aaa39c;
    border-bottom: none;
    border-radius: 2px 2px 0 0;
    background: linear-gradient(#e9e5e1, #d5cfca);
}
.tabs .active {
    width: 44px;
    height: 24px;
    border-top: 2px solid #d9962f;
    background: #f6f3f1;
}
.tasks {
    flex: 1;
    padding: 8px 8px 0;
    border: 1px solid #a39c95;
    border-bottom: none;
    background-color: #c9c4c0;
}
.task-box {
    display: flex;
    flex-direction: column;
    height: 85px;
    background-color: #f0ebe8;
}
.task-box h2 {
    display: flex;
    align-items: center;
    gap: 5px;
    height: 21px;
    margin: 0 0 4px;
    padding: 0 3px 0 4px;
    background: linear-gradient(90deg, #ffc27a, #ffd09a);
    font-size: 14px;
}
.face {
    width: 17px;
    height: 16px;
}
.fold {
    width: 12px;
    height: 12px;
    margin-left: auto;
}
.task-box a {
    display: flex;
    align-items: center;
    gap: 4px;
    height: 19px;
    padding-left: 5px;
}
.task-box a svg {
    width: 13px;
    height: 13px;
}

/* 3D view */
.viewer {
    display: flex;
    flex: 1;
    flex-direction: column;
    min-width: 0;
}
.scene {
    position: relative;
    display: flex;
    flex: 1;
    align-items: center;
    justify-content: center;
    min-height: 0;
    background: linear-gradient(#333366, #9593a9);
}
.piston {
    width: 340px;
    height: 330px;
}
.fps {
    position: absolute;
    bottom: 3px;
    left: 9px;
    margin: 0;
    color: #e6e63c;
    font-family: "Liberation Mono", monospace;
    font-size: 14px;
    text-shadow: 1px 1px 0 #000;
}
.axes {
    position: absolute;
    right: 0;
    bottom: 20px;
    width: 28px;
    height: 30px;
    font-family: "Liberation Sans", sans-serif;
    font-size: 9px;
    stroke-width: 0;
}
.doc-tabs {
    display: flex;
    flex: none;
    height: 20px;
    overflow: hidden;
}
.doc-tabs button {
    display: flex;
    align-items: center;
    gap: 7px;
    height: 26px;
    padding: 0 9px 0 5px;
    border: 1px solid #b4ada6;
    border-left: none;
    background: linear-gradient(#e4dfdb, #d9d3ce);
}
.doc-tabs .active {
    background: #f7f4f2;
}
.doc-tabs svg {
    width: 13px;
    height: 13px;
}
```
